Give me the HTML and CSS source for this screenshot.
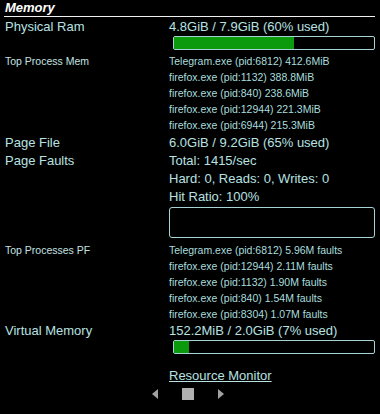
FILE: index.html
```html
<!DOCTYPE html>
<html>
<head>
<meta charset="utf-8">
<link rel="stylesheet" href="styles.css">
</head>
<body>
<div class="panel">
  <div class="title">Memory</div>
  <div class="row big first">
    <div class="label">Physical Ram</div>
    <div class="value">
      <div>4.8GiB / 7.9GiB (60% used)</div>
      <div class="bar"><div class="fill" style="width:60%"></div></div>
    </div>
  </div>
  <div class="row small mem">
    <div class="label">Top Process Mem</div>
    <div class="value">
      <div>Telegram.exe (pid:6812) 412.6MiB</div>
      <div>firefox.exe (pid:1132) 388.8MiB</div>
      <div>firefox.exe (pid:840) 238.6MiB</div>
      <div>firefox.exe (pid:12944) 221.3MiB</div>
      <div>firefox.exe (pid:6944) 215.3MiB</div>
    </div>
  </div>
  <div class="row big pagefile">
    <div class="label">Page File</div>
    <div class="value">6.0GiB / 9.2GiB (65% used)</div>
  </div>
  <div class="row big">
    <div class="label">Page Faults</div>
    <div class="value">
      <div>Total: 1415/sec</div>
      <div>Hard: 0, Reads: 0, Writes: 0</div>
      <div>Hit Ratio: 100%</div>
      <div class="graph"></div>
    </div>
  </div>
  <div class="row small pf">
    <div class="label">Top Processes PF</div>
    <div class="value">
      <div>Telegram.exe (pid:6812) 5.96M faults</div>
      <div>firefox.exe (pid:12944) 2.11M faults</div>
      <div>firefox.exe (pid:1132) 1.90M faults</div>
      <div>firefox.exe (pid:840) 1.54M faults</div>
      <div>firefox.exe (pid:8304) 1.07M faults</div>
    </div>
  </div>
  <div class="row big">
    <div class="label">Virtual Memory</div>
    <div class="value">
      <div>152.2MiB / 2.0GiB (7% used)</div>
      <div class="bar"><div class="fill" style="width:7.5%"></div></div>
    </div>
  </div>
  <div class="row big link-row">
    <div class="label"></div>
    <div class="value"><a class="link" href="#">Resource Monitor</a></div>
  </div>
  <div class="controls">
    <span class="tri-left"></span>
    <span class="stop"></span>
    <span class="tri-right"></span>
  </div>
</div>
</body>
</html>
```
FILE: styles.css
```css
html, body {
  margin: 0;
  padding: 0;
  background: #000;
}
body {
  width: 380px;
  height: 414px;
  overflow: hidden;
  font-family: "Liberation Sans", Arial, sans-serif;
  color: #b8e2e2;
}
.title {
  margin: 0 5px 0 4px;
  padding: 1px 0 0 1px;
  height: 15px;
  line-height: 14px;
  font-size: 13px;
  font-weight: bold;
  font-style: italic;
  color: #fff;
  border-bottom: 1px solid #f0f0f0;
}
.row {
  display: grid;
  grid-template-columns: 169px 1fr;
}
.label {
  padding-left: 5px;
}
.big {
  font-size: 13px;
  line-height: 18px;
}
.small {
  font-size: 10.5px;
  line-height: 16px;
}
.small .label {
  color: #c4e2e2;
}
.small .value {
  color: #a8dede;
}
.first {
  margin-top: 1px;
}
.mem {
  margin-top: 3px;
}
.pagefile {
  margin-top: 1px;
}
.bar {
  margin-left: 4px;
  width: 200px;
  height: 12px;
  border: 1px solid #a6d4d4;
  border-radius: 2px;
}
.fill {
  height: 12px;
  background: #0b9a0b;
}
.graph {
  margin-top: 1px;
  width: 204px;
  height: 29px;
  border: 1px solid #a6d4d4;
  border-radius: 3px;
}
.pf {
  margin-top: 4px;
}
.link-row {
  margin-top: 13px;
}
.link {
  color: #b8e2e2;
  text-decoration: underline;
}
.controls {
  display: flex;
  align-items: center;
  justify-content: center;
  gap: 24px;
  margin-top: 3px;
  padding-right: 4px;
}
.tri-left {
  width: 0;
  height: 0;
  border-top: 5px solid transparent;
  border-bottom: 5px solid transparent;
  border-right: 6px solid #a0a0a0;
}
.tri-right {
  width: 0;
  height: 0;
  border-top: 5px solid transparent;
  border-bottom: 5px solid transparent;
  border-left: 6px solid #a0a0a0;
}
.stop {
  width: 12px;
  height: 12px;
  background: #b0b0b0;
}
```
